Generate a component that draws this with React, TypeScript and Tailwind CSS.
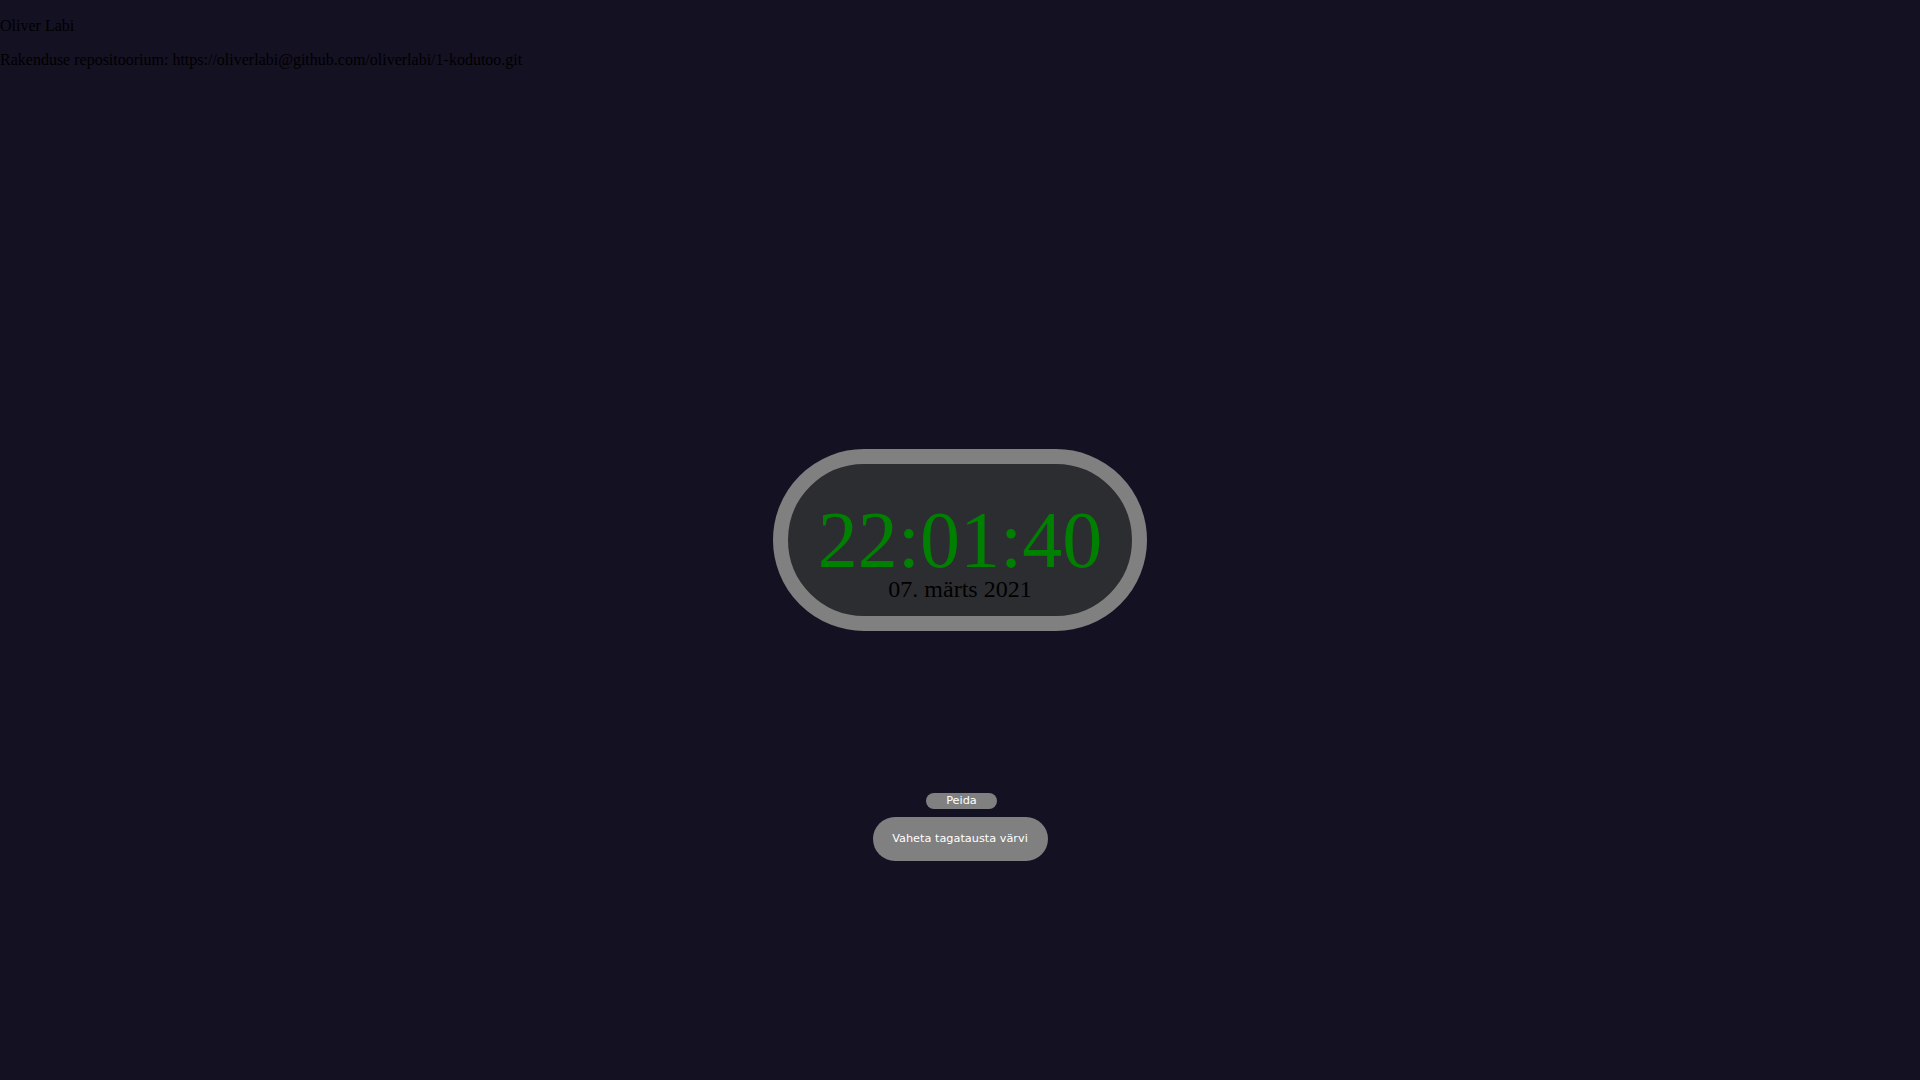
const serif = "font-['Liberation_Serif','Times_New_Roman',serif]";
const btnFont = "font-['DejaVu_Sans','Verdana',sans-serif]";

function Clock() {
  return (
    <div className="mx-auto w-[374px] h-[182px] rounded-full border-[15px] border-[#808080] bg-[#2c2d30]">
      <div className={`flex h-full flex-col items-center pt-[40px] ${serif}`}>
        <div className="text-[80px] leading-[73px] text-[#008000]">22:01:40</div>
        <div className="text-[24px] leading-[24px] text-black">07. märts 2021</div>
      </div>
    </div>
  );
}

export default function App() {
  return (
    <div className="min-h-screen bg-[#141123]">
      <div className={`pt-[17px] text-base leading-[18px] text-black ${serif}`}>
        <p className="mb-4">Oliver Labi</p>
        <p>Rakenduse repositoorium: https://oliverlabi@github.com/oliverlabi/1-kodutoo.git</p>
      </div>

      <div className="mt-[380px]">
        <Clock />
      </div>

      <div className={`mt-[162px] flex flex-col items-center gap-2 ${btnFont}`}>
        <button className="ml-[3px] h-4 w-[71px] rounded-full bg-[#808080] text-[11.3px] leading-4 text-white">
          Peida
        </button>
        <button className="h-11 w-[175px] rounded-full bg-[#808080] text-[11.3px] text-white">
          Vaheta tagatausta värvi
        </button>
      </div>
    </div>
  );
}
